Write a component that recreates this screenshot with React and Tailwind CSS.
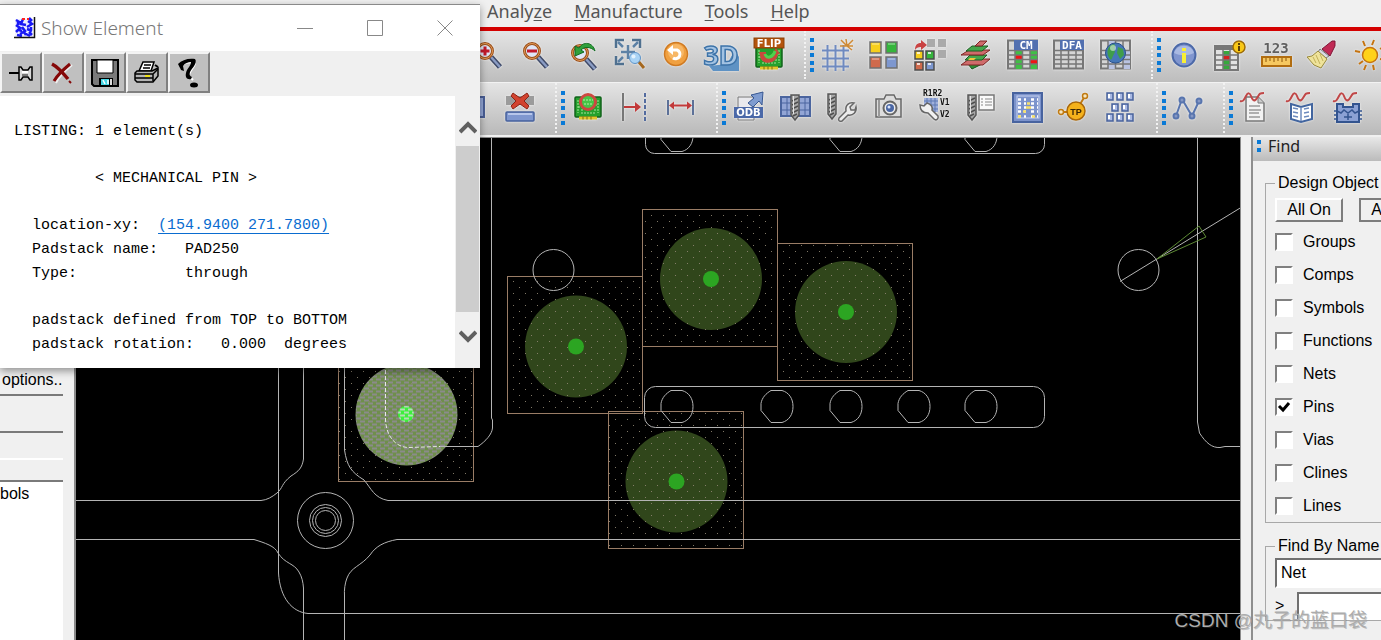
import React, { useState } from 'react';

const hiddenMenus = ['Setup', 'Shape', 'Logic', 'Place', 'FlowPlan', 'Route'];

const menus = [
  { before: 'Analy', key: 'z', after: 'e' },
  { before: '', key: 'M', after: 'anufacture' },
  { before: '', key: 'T', after: 'ools' },
  { before: '', key: 'H', after: 'elp' },
];

const objects = ['Groups', 'Comps', 'Symbols', 'Functions', 'Nets', 'Pins', 'Vias', 'Clines', 'Lines'];

const pads = [
  { x: 507.5, y: 276.5, cx: 576, cy: 346.5 },
  { x: 642.5, y: 209.5, cx: 711, cy: 279 },
  { x: 777.5, y: 243.5, cx: 846, cy: 312 },
  { x: 608.5, y: 411.5, cx: 676.5, cy: 481.5 },
];

const Icon = ({ children }) => (
  <svg width="32" height="32" viewBox="0 0 32 32" fill="none" className="overflow-visible drop-shadow-[0_0_1px_#f4f4f4]">
    {children}
  </svg>
);

/* ---------- toolbar icons, first row ---------- */

const Lens = ({ cx = 12, cy = 12 }) => (
  <g>
    <path d={`M${cx + 6} ${cy + 6}l9 10`} stroke="#3f4a68" strokeWidth="5.5" />
    <path d={`M${cx + 6} ${cy + 6}l9 10`} stroke="#8a9cc4" strokeWidth="2.5" />
    <circle cx={cx} cy={cy} r="7.5" fill="#dfe6f7" stroke="#9a4f1c" strokeWidth="3" />
    <circle cx={cx} cy={cy} r="7.5" stroke="#e39a55" strokeWidth="1" />
  </g>
);

const ZoomIn = () => (
  <Icon><Lens /><path d="M7.500 12h9M12 7.500v9" stroke="#c3192a" strokeWidth="3" /></Icon>
);

const ZoomOut = () => (
  <Icon><Lens /><path d="M7 12h10" stroke="#c3192a" strokeWidth="3" /></Icon>
);

const ZoomPrevious = () => (
  <Icon>
    <Lens cx={14} cy={14} />
    <path d="M29 12C27 3 17 2 13 9l-4-2v10l9-4-3-2c4-4 10-3 14 1z" fill="#31a03b" stroke="#0f6a20" />
  </Icon>
);

const ZoomFit = () => (
  <Icon>
    <path d="M3 9V1h8M19 1h8v8M3 17v8h8" stroke="#4f708f" strokeWidth="2.500" />
    <path d="M5 3l5 5M25 3l-5 5M5 23l5-5M15 6v14M8 13h14" stroke="#5d81a5" strokeWidth="2.500" />
    <path d="M25 22l6 7" stroke="#a5681f" strokeWidth="3" />
    <circle cx="22" cy="19" r="5.500" fill="#a9d3f5" stroke="#5d92c6" />
    <circle cx="20.500" cy="17.500" r="2" fill="#e3f2fd" />
  </Icon>
);

const Refresh = () => (
  <Icon>
    <circle cx="16" cy="15" r="11.500" fill="#f0a040" stroke="#cf7a22" strokeWidth="1.500" />
    <circle cx="16" cy="13" r="8" fill="#f7b765" />
    <path d="M11 11h6a4.500 4.500 0 1 1-4 8" stroke="#fff" strokeWidth="3" />
    <path d="M7 11l6-5v10z" fill="#fff" />
  </Icon>
);

const ThreeD = () => (
  <Icon>
    <path d="M3 27l4 5h26V18l-4-7-8 14z" fill="#5e92c4" />
    <text x="15" y="26" textAnchor="middle" fontSize="27" fontWeight="bold" fontFamily="Noto Sans, sans-serif" fill="#a3c3e3" stroke="#3d73a8" strokeWidth="1.500">3D</text>
  </Icon>
);

const Board = ({ y = 0 }) => (
  <g transform={`translate(0 ${y})`}>
    <rect x="3" y="6" width="26" height="20" rx="1" fill="#25a12d" stroke="#10601a" strokeWidth="1.500" />
    <path d="M6 9v13M26 9v13M9 22h14M9 19h2M22 19h2M6 16h4M23 14h3" stroke="#a7e39b" strokeDasharray="2 1" />
    <path d="M7 27h18" stroke="#e3c62b" strokeWidth="3" />
    <path d="M11 25.500v3M15 25.500v3M19 25.500v3" stroke="#7d6a10" />
  </g>
);

const Flip = () => (
  <Icon>
    <Board y={2} />
    <path d="M6 13h7v2c0 6 8 5 9-1l-3 1 4-6 4 6h-2c-1 11-18 12-18 1z" fill="#c8483c" />
    <path d="M12 15c1 5 8 4 10-3" stroke="#4ed24c" strokeWidth="3" />
    <rect x="1" y="-1" width="30" height="10" fill="#b4540c" stroke="#8a3f06" />
    <text x="16" y="8" textAnchor="middle" fontSize="10" fontWeight="bold" fontFamily="DejaVu Sans" fill="#fff">FLIP</text>
  </Icon>
);

const GridToggle = () => (
  <Icon>
    <path d="M1 11.500h27M1 19.500h27M1 27.500h27M6.500 6v26M14.500 6v26M22.500 6v26" stroke="#6f8ac0" strokeWidth="2" />
    <path d="M26 7l-6-6M26 7l-1-7M26 7l6-6M26 7h6M26 7l5 4M26 7h-7" stroke="#cf8a35" strokeWidth="1.500" />
  </Icon>
);

const Squares = () => (
  <Icon>
    <g stroke="#6f6f6f" strokeWidth="1.500">
      <rect x="2" y="3" width="11" height="11" fill="#f6cf1c" />
      <rect x="18" y="3" width="11" height="11" fill="#35b53c" />
      <rect x="2" y="18" width="11" height="11" fill="#cf6a4c" />
      <rect x="18" y="18" width="11" height="11" fill="#7d97cf" />
    </g>
    <path d="M4 5h7M20 5h7M4 20h7M20 20h7" stroke="#fff" strokeOpacity=".6" />
  </Icon>
);

const SquaresMove = () => (
  <Icon>
    <path d="M13 0h8v8h-8zM24 0h8v8h-8zM24 11h8v8h-8z" fill="#aaa" />
    <g stroke="#4c4c4c" strokeWidth="1.500">
      <rect x="1" y="12" width="8" height="8" fill="#f6cf1c" />
      <rect x="12" y="12" width="8" height="8" fill="#35b53c" />
      <rect x="1" y="23" width="8" height="8" fill="#cf6a4c" />
      <rect x="12" y="23" width="8" height="8" fill="#7d97cf" />
    </g>
    <path d="M3 14h3M14 14h3M3 25h3M14 25h3" stroke="#fff" strokeWidth="1.500" />
    <path d="M1 11c0-6 3-7 6-7V1l6 5-6 5V8c-3 0-5 1-6 3z" fill="#c94343" />
  </Icon>
);

const Layers = () => (
  <Icon>
    <path d="M8 25l10-3 4 3-10 5z" fill="#2f8f37" stroke="#15571c" />
    <path d="M1 26l8-6h21l-7 6z" fill="#cf6b6b" stroke="#7b2424" />
    <path d="M5 21l5-5h17l-5 5z" fill="#44a64b" stroke="#1a5c22" />
    <path d="M1 16l8-5h21l-7 5z" fill="#cf6b6b" stroke="#7b2424" />
    <path d="M6 12l6-5h16l-6 5z" fill="#44a64b" stroke="#1a5c22" />
    <path d="M15 7l5-5h7l-5 5z" fill="#cf6b6b" stroke="#7b2424" />
    <path d="M8 21h6l2-2h-6z" fill="#f0c53b" />
  </Icon>
);

const Sheet = ({ cells }) => (
  <g>
    <rect x="1" y="1.500" width="29" height="28" fill="#d5d5d5" stroke="#777" strokeWidth="2" />
    {cells}
    <path d="M2 11.500h28M2 16h28M2 20.500h28M2 25h28M8 2v28M15.500 2v28M23 2v28" stroke="#777" strokeWidth="1.500" />
  </g>
);

const Banner = ({ children }) => (
  <g>
    <rect x="7" y="1" width="24" height="10" fill="#5270b0" />
    <text x="19" y="10" textAnchor="middle" fontSize="11" fontWeight="bold" fontFamily="DejaVu Sans Mono" fill="#fff">{children}</text>
  </g>
);

const ConstraintManager = () => (
  <Icon>
    <Sheet cells={
      <g>
        <path d="M8 12h7v4H8zM8 21h7v9H8zM23 12h7v8h-7zM23 25h7v5h-7z" fill="#3fbf45" />
        <path d="M8 16h7v4.500H8zM23 20.500h7V25h-7z" fill="#f01414" />
      </g>
    } />
    <Banner>CM</Banner>
  </Icon>
);

const Dfa = () => (
  <Icon><Sheet /><Banner>DFA</Banner></Icon>
);

const GlobeSheet = () => (
  <Icon>
    <Sheet cells={<path d="M8 2h7v28H8zM23 12h7v18h-7z" fill="#b9c3e2" />} />
    <circle cx="15.500" cy="14" r="10" fill="#4577b8" stroke="#27508b" />
    <path d="M9 8c4-4 7-3 6 0s1 4-1 7-2 7-4 5-4-8-1-12zM18 8l5 2 1 6-4 4-3-6z" fill="#3f9d4b" />
    <circle cx="13" cy="9" r="3" fill="#fff" fillOpacity=".5" />
  </Icon>
);

const Info = () => (
  <Icon>
    <circle cx="16" cy="16" r="11.500" fill="#8196cf" stroke="#4c69a8" strokeWidth="2" />
    <path d="M6 14a10.500 10.500 0 0 1 20 0c-6 3-14 3-20 0z" fill="#a9b9e2" />
    <path d="M14 9h4v3h-4zM14 14h4v10h-4z" fill="#f8ef35" />
  </Icon>
);

const SheetInfo = () => (
  <Icon>
    <rect x="0" y="7" width="23" height="24" fill="#e2e2e2" stroke="#777" strokeWidth="2" />
    <rect x="0" y="7" width="23" height="4" fill="#777" />
    <path d="M8 12h7v18H8z" fill="#36a83d" />
    <path d="M8 17h7v4H8z" fill="#d42020" />
    <path d="M0 16h23M0 21h23M0 26h23M8 8v23M15 8v23" stroke="#777" strokeWidth="1.500" />
    <circle cx="24" cy="8" r="6" fill="#f9c817" stroke="#9b6b08" strokeWidth="1.500" />
    <path d="M23 4h2v2h-2zM23 7h2v5h-2z" fill="#5d3f04" />
  </Icon>
);

const Measure = () => (
  <Icon>
    <text x="15" y="14" textAnchor="middle" fontSize="14" fontWeight="bold" fontFamily="DejaVu Sans Mono" fill="#606060">123</text>
    <rect x="1" y="18" width="29" height="9" fill="#f6c860" stroke="#b16d10" strokeWidth="2" />
    <path d="M5 19v4M9 19v3M13 19v4M17 19v3M21 19v4M25 19v3" stroke="#8a5208" />
  </Icon>
);

const Brush = () => (
  <Icon>
    <path d="M25 2h3v5l-5 10-8-7z" fill="#c02a55" stroke="#7c1535" />
    <path d="M13 10l9 7-3 2-8-6z" fill="#d9d9e4" stroke="#777" />
    <path d="M11 12l9 8-6 9-7-3-7-8 5-1z" fill="#efe39a" stroke="#97883a" />
    <path d="M9 16l4 9M6 18l3 6M13 15l3 7" stroke="#c2b15b" />
  </Icon>
);

const Sun = () => (
  <Icon>
    <circle cx="16" cy="16" r="7.500" fill="#ffd21a" stroke="#c5730f" strokeWidth="1.500" />
    <path d="M20 1l-2 5M20 31l-1-5M1 12l5 1M26 20l5 1M5 25l4-3M26 10l5-3M9 2l2 5M12 26l-2 5" stroke="#c5730f" strokeWidth="2" />
  </Icon>
);

/* ---------- toolbar icons, second row ---------- */

const Panel = () => (
  <Icon><rect x="0" y="5" width="27" height="20" fill="#93a7d8" stroke="#4a5f96" strokeWidth="2" /></Icon>
);

const Unplace = () => (
  <Icon>
    <rect x="2" y="4" width="28" height="9" fill="#9b9b9b" />
    <path d="M9 1l7 5 7-5 2 3-5 5 5 5-2 3-7-5-7 5-2-3 5-5-5-5z" fill="#d2432f" stroke="#8c2415" />
    <rect x="2" y="20" width="28" height="9" rx="1" fill="#7f97cf" stroke="#46609c" strokeWidth="1.500" />
    <path d="M4 22h24" stroke="#b7c6ea" strokeWidth="2" />
  </Icon>
);

const BoardRing = () => (
  <Icon>
    <Board y={-1} />
    <circle cx="16" cy="10" r="7.500" fill="#46c546" stroke="#cd4840" strokeWidth="3" />
    <path d="M11 8h10M13 11v3M16 11v3M19 11v3" stroke="#b7f0a9" strokeDasharray="2 1" />
  </Icon>
);

const MoveTo = () => (
  <Icon>
    <path d="M5 1v28" stroke="#777" strokeWidth="2" />
    <path d="M27 1v28" stroke="#536b9e" strokeWidth="2" strokeDasharray="4 2" />
    <path d="M6 15h13" stroke="#c23a3a" strokeWidth="2" />
    <path d="M17 10l6 5-6 5z" fill="#c23a3a" />
  </Icon>
);

const Dimension = () => (
  <Icon>
    <path d="M3 8v15M28 8v15" stroke="#5d7198" strokeWidth="2" />
    <path d="M6 13.500h19" stroke="#c23a3a" strokeWidth="2" />
    <path d="M4 13.500l5-4v8zM27 13.500l-5-4v8z" fill="#c23a3a" />
  </Icon>
);

const Odb = () => (
  <Icon>
    <path d="M5 5h16v23H5z" fill="#e9e9ed" stroke="#777" />
    <rect x="1" y="15" width="29" height="11" fill="#4a68a8" />
    <text x="15.500" y="24" textAnchor="middle" fontSize="10" fontWeight="bold" fontFamily="DejaVu Sans" fill="#fff">ODB</text>
    <path d="M15 11l6-5-3-3 12-3-1 13-3-4-6 6z" fill="#7f9cd0" stroke="#35558f" />
  </Icon>
);

const Drill = ({ x = 0, y = 0 }) => (
  <g transform={`translate(${x} ${y})`}>
    <path d="M0 0h8v20l-4 5-4-5z" fill="#a8a8a8" stroke="#555" strokeWidth="1.500" />
    <path d="M1 6l6-3M1 10l6-3M1 14l6-3M1 18l6-3M2 21l4-2" stroke="#4f4f4f" strokeWidth="1.500" />
    <path d="M2.500 1v18" stroke="#e5e5e5" />
  </g>
);

const DrillTable = () => (
  <Icon>
    <rect x="1" y="5" width="29" height="19" fill="#92a5d5" stroke="#4b659f" strokeWidth="2" />
    <path d="M1 11h29M1 18h29M7 5v19M25 5v19" stroke="#4b659f" />
    <Drill x={11} y={3} />
  </Icon>
);

const DrillSetup = () => (
  <Icon>
    <Drill x={2} y={2} />
    <path d="M13 26l7-7c-1-6 3-9 8-8l-4 4 1 3h4l1-3c1 5-3 9-8 8l-6 6c-3 1-4-1-3-3z" fill="#ececec" stroke="#666" strokeWidth="1.500" />
  </Icon>
);

const CameraShot = () => (
  <Icon>
    <path d="M3 7h8l2-4h8l2 4h5v18H3z" fill="#dcdcdc" stroke="#666" strokeWidth="1.500" />
    <path d="M6 8v17" stroke="#999" strokeWidth="2" />
    <circle cx="17" cy="16" r="6.500" fill="#eee" stroke="#666" strokeWidth="2" />
    <circle cx="17" cy="16" r="4" fill="#4a67a5" />
    <circle cx="16" cy="15" r="1.500" fill="#dbe5fb" />
  </Icon>
);

const Rename = () => (
  <Icon>
    <path d="M5 6h14v14H5z" fill="#9fb0dc" />
    <path d="M5 9h14M5 13h14M5 17h14M8 6v14M12 6v14M16 6v14" stroke="#5d78b3" />
    <path d="M1 13l4 1 3-3c4 1 6 4 5 7l6 6c1 3-2 5-4 3l-6-6c-5 0-8-3-8-8z" fill="#f1f1f1" stroke="#666" strokeWidth="1.500" />
    <g fontSize="8" fontWeight="bold" fontFamily="DejaVu Sans Mono" fill="#111">
      <text x="4" y="4">R1R2</text>
      <text x="21" y="13">V1</text>
      <text x="21" y="25">V2</text>
    </g>
  </Icon>
);

const DrillLegend = () => (
  <Icon>
    <Drill x={3} y={3} />
    <rect x="14" y="3" width="15" height="15" fill="#fafafa" stroke="#777" strokeWidth="1.500" />
    <path d="M16 7h2M16 10h2M16 13h2M20 7h7M20 10h7M20 13h7" stroke="#888" />
  </Icon>
);

const Matrix = () => (
  <Icon>
    <rect x="1" y="1" width="29" height="29" fill="#7c93cc" stroke="#48639f" strokeWidth="2" />
    <rect x="5" y="4" width="22" height="22" stroke="#c6d1ef" />
    <path d="M6 7.500h20M6 11.500h20M6 15.500h20M6 19.500h20M6 24.500h20" stroke="#fff" strokeWidth="2.500" strokeDasharray="3 3 2 5" />
    <path d="M15 11.500h3M11 19.500h3M6 24.500h3M20 24.500h3M14 15.500h5" stroke="#f5df6a" strokeWidth="2.500" />
  </Icon>
);

const TestPoint = () => (
  <Icon>
    <path d="M4 20h10M21 14l6-10" stroke="#c07a12" strokeWidth="2" />
    <circle cx="3" cy="20" r="2.500" fill="#f5e6c0" stroke="#c07a12" strokeWidth="1.500" />
    <circle cx="27" cy="4" r="2.500" fill="#f5e6c0" stroke="#c07a12" strokeWidth="1.500" />
    <circle cx="18" cy="19" r="9" fill="#f5b21c" stroke="#a9680b" strokeWidth="1.500" />
    <text x="18" y="23" textAnchor="middle" fontSize="9" fontWeight="bold" fontFamily="Liberation Sans" fill="#3b2605">TP</text>
  </Icon>
);

const Array3 = () => (
  <Icon>
    {[[2, 1], [12, 1], [22, 1], [7, 12], [17, 12], [2, 22], [12, 22], [22, 22]].map(([x, y]) => (
      <g key={`${x}-${y}`}>
        <rect x={x} y={y} width="6" height="7" fill="#a9b9e3" stroke="#47619b" strokeWidth="1.500" />
        <path d={`M${x + 2} ${y + 1}v4`} stroke="#fff" strokeWidth="2" />
      </g>
    ))}
  </Icon>
);

const Polyline = () => (
  <Icon>
    <path d="M3 24L9 7l10 17 7-15" stroke="#5875ae" strokeWidth="2" />
    <g fill="#8597c4" stroke="#5875ae" strokeWidth="2">
      <circle cx="3" cy="24" r="2.500" />
      <circle cx="9" cy="8" r="2.500" />
      <circle cx="19" cy="24" r="2.500" />
      <circle cx="26" cy="9" r="2.500" />
    </g>
  </Icon>
);

const Wave = () => (
  <path d="M0 9C3 10 4 8 6 4s4-3 5 0 3 7 6 2 3-5 7-5" stroke="#c04747" strokeWidth="2" />
);

const WaveReport = () => (
  <Icon>
    <path d="M6 5h12l6 6v18H6z" fill="#f2f2f2" stroke="#777" strokeWidth="1.500" />
    <path d="M18 5v6h6" fill="#ccc" stroke="#777" />
    <path d="M9 14h11M9 18h12M9 21h10M9 25h11" stroke="#999" strokeWidth="1.500" />
    <Wave />
  </Icon>
);

const WaveBook = () => (
  <Icon>
    <path d="M5 12l10 3 11-3v15l-11 3-10-3z" fill="#fff" stroke="#42659f" strokeWidth="2" />
    <path d="M15 15v14M7 16l5 1M7 20l5 1M7 24l5 1M23 16l-5 1M23 20l-5 1M23 24l-5 1" stroke="#6d8abd" strokeWidth="1.500" />
    <Wave />
  </Icon>
);

const WaveChip = () => (
  <Icon>
    <path d="M4 12h6v3h10v-3h6v18H4z" fill="#8ba1d4" stroke="#33548f" strokeWidth="2" />
    <path d="M1 19h3M1 23h3M1 27h3M26 19h3M26 23h3M26 27h3M4 19l4 2 3-3 4 3 4-3 3 3 4-2M15 20v8M11 25h8" stroke="#33548f" strokeWidth="1.500" />
    <Wave />
  </Icon>
);

/* ---------- dialog icons ---------- */

const AppMark = () => (
  <svg width="22" height="22" viewBox="0 0 22 22" fill="none" className="shrink-0">
    <path d="M1 2h18v18H1z" fill="#eef" />
    <path d="M2 3l5 3M9 2l-2 5 5 1M14 4l4 3-5 3M2 8l4 3-4 4M8 10l3 4-5 3M13 12l5 2M12 17l4 2M3 18l5 1M17 10v3M4 5v3M15 1l3 3M10 15l2 3M5 13l3 1M15 15l3 3" stroke="#1818f5" strokeWidth="2.500" />
    <path d="M8 2h3M13 2h2" stroke="#f22" strokeWidth="2" />
    <path d="M0 20.500h20.500V0" stroke="#111" strokeWidth="1.500" />
  </svg>
);

const Pushpin = () => (
  <svg width="26" height="28" viewBox="0 0 26 28" fill="none">
    <path d="M1 14h11" stroke="#000" strokeWidth="2" />
    <path d="M11 8h2l2 3h5l2-3h2v13h-2l-2-3h-5l-2 3h-2z" fill="#d8d8d8" stroke="#000" strokeWidth="1.500" />
    <path d="M14 13h6" stroke="#fff" strokeWidth="2" />
    <path d="M14 16h6" stroke="#777" strokeWidth="2" />
  </svg>
);

const RedCross = () => (
  <svg width="26" height="28" viewBox="0 0 26 28" fill="none">
    <path d="M22 6C16 11 9 17 6 24" stroke="#eee" strokeWidth="2" />
    <path d="M2 5c6 3 11 9 16 15" stroke="#850808" strokeWidth="3.500" />
    <path d="M20 5C14 10 8 15 4 22" stroke="#850808" strokeWidth="3" />
    <path d="M19 22l2 2" stroke="#850808" strokeWidth="2" />
  </svg>
);

const Floppy = () => (
  <svg width="28" height="28" viewBox="0 0 28 28" fill="none">
    <path d="M1 1h26v26H3l-2-2z" fill="#7a7a7a" stroke="#000" strokeWidth="2" />
    <path d="M6 1h16v13H6z" fill="#fff" stroke="#000" />
    <path d="M8 19h14v8H8z" fill="#000" />
    <path d="M10 20h8v6h-8z" fill="#45d6e4" />
    <path d="M12 21l2 4M17 21v4" stroke="#fff" strokeWidth="1.500" />
    <path d="M19 20h2v6h-2z" fill="#ddd" />
  </svg>
);

const Printer = () => (
  <svg width="28" height="28" viewBox="0 0 28 28" fill="none">
    <path d="M10 3h11l-3 9H6z" fill="#fff" stroke="#000" strokeWidth="1.500" />
    <path d="M11 6h7M10 9h7" stroke="#000" strokeWidth="1.500" />
    <path d="M4 12h15l6-3v8l-5 6H4l-2-2v-7z" fill="#b5b5b5" stroke="#000" strokeWidth="1.500" />
    <path d="M2 15h18v7M20 15l5-5M2 19h18" stroke="#000" strokeWidth="1.500" />
    <path d="M12 17h5" stroke="#f0e21a" strokeWidth="2" />
    <path d="M22 6l3 2" stroke="#000" strokeWidth="2" />
  </svg>
);

const HelpMark = () => (
  <svg width="28" height="30" viewBox="0 0 28 30" fill="none">
    <path d="M6 11C5 6 11 4 20 4c1 5-6 8-6 14l4 4" stroke="#fff" strokeWidth="2" />
    <path d="M3 6C7 2 13 0 20 1c3 4-3 9-5 13-1 3 0 4 2 5l-1 2c-4 1-6-2-5-6 1-5 5-7 5-11-3 0-6 1-8 4l1 5-3-1z" fill="#000" />
    <ellipse cx="19" cy="27" rx="4" ry="2.500" fill="#000" />
  </svg>
);

const dialogTools = [
  { label: 'Pin window', icon: <Pushpin /> },
  { label: 'Close listing', icon: <RedCross /> },
  { label: 'Save', icon: <Floppy /> },
  { label: 'Print', icon: <Printer /> },
  { label: 'Help', icon: <HelpMark /> },
];

function Handle() {
  return (
    <div className="ml-1 flex h-[34px] w-1 shrink-0 flex-col justify-between">
      {[0, 1, 2, 3, 4].map(i => <span key={i} className="size-1 bg-[#0a7ad6]" />)}
    </div>
  );
}

function ToolGroup({ icons, className, columns, first }) {
  return (
    <div className={`flex shrink-0 items-center ${first ? 'justify-end' : 'border-l-2 border-dotted border-[#f2f2f2]'} pr-3 ${className}`}>
      {!first && <Handle />}
      <div className={`grid ${columns}`}>
        {icons.map((Glyph, i) => (
          <button key={i} type="button" aria-label={Glyph.name} className="flex justify-center">
            <Glyph />
          </button>
        ))}
      </div>
    </div>
  );
}

function MenuBar() {
  return (
    <nav className="flex h-[27px] shrink-0 items-center bg-[#f0f0f0] pb-[5px] font-['Noto_Sans',sans-serif] text-[18px] leading-6 text-[#555]">
      <div className="flex w-[487px] shrink-0 gap-5 overflow-hidden pl-[43px]">
        {hiddenMenus.map(m => <button key={m} type="button">{m}</button>)}
      </div>
      <div className="flex gap-[22px]">
        {menus.map(m => (
          <button key={m.key} type="button">
            {m.before}<span className="underline underline-offset-2">{m.key}</span>{m.after}
          </button>
        ))}
      </div>
    </nav>
  );
}

function Toolbars() {
  return (
    <div className="shrink-0 overflow-hidden border-t-4 border-[#d40000]">
      <div className="flex h-[51px] bg-linear-to-b from-[#e4e4e4] to-[#bdbdbd] pb-[3px]">
        <ToolGroup first className="w-[804px]" columns="w-[326px] grid-cols-7" icons={[ZoomIn, ZoomOut, ZoomPrevious, ZoomFit, Refresh, ThreeD, Flip]} />
        <ToolGroup className="w-[347px]" columns="w-[326px] grid-cols-7" icons={[GridToggle, Squares, SquaresMove, Layers, ConstraintManager, Dfa, GlobeSheet]} />
        <ToolGroup className="w-[254px]" columns="w-[233px] grid-cols-5" icons={[Info, SheetInfo, Measure, Brush, Sun]} />
      </div>
      <div className="flex h-[53px] border-t border-[#f2f2f2] bg-linear-to-b from-[#e4e4e4] to-[#b9b9b9] pb-[2px]">
        <ToolGroup first className="w-[555px]" columns="w-[93px] grid-cols-2" icons={[Panel, Unplace]} />
        <ToolGroup className="w-[161px]" columns="w-[140px] grid-cols-3" icons={[BoardRing, MoveTo, Dimension]} />
        <ToolGroup className="w-[440px]" columns="w-[419px] grid-cols-9" icons={[Odb, DrillTable, DrillSetup, CameraShot, Rename, DrillLegend, Matrix, TestPoint, Array3]} />
        <ToolGroup className="w-[67px]" columns="w-[46px] grid-cols-1" icons={[Polyline]} />
        <ToolGroup className="w-[161px]" columns="w-[140px] grid-cols-3" icons={[WaveReport, WaveBook, WaveChip]} />
      </div>
    </div>
  );
}

// hole outline with the flat lower-left edge
const Hole = ({ cx, cy }) => (
  <path d={`M${cx - 16} ${cy + 4}V${cy - 3}C${cx - 15} ${cy - 9} ${cx - 11} ${cy - 13} ${cx - 6} ${cy - 16}H${cx + 5}C${cx + 12} ${cy - 14} ${cx + 16} ${cy - 8} ${cx + 16} ${cy}S${cx + 12} ${cy + 14} ${cx + 5} ${cy + 16}H${cx - 6}Z`} />
);

function BoardView() {
  return (
    <svg width="100%" height="100%" className="block bg-black">
      <defs>
        <pattern id="dots" width="12" height="12" patternUnits="userSpaceOnUse">
          <rect x="9" y="5" width="1" height="1" fill="#8d8470" />
          <rect x="3" y="11" width="1" height="1" fill="#8d8470" />
        </pattern>
        <pattern id="hatch" width="8" height="6" patternUnits="userSpaceOnUse">
          <rect width="8" height="6" fill="#6f8f4c" />
          <path d="M0 1.500h5M4 4.500h4M0 4.500h1" stroke="#8b8b8b" strokeWidth="2" />
        </pattern>
        <pattern id="hatchCore" width="8" height="6" patternUnits="userSpaceOnUse">
          <rect width="8" height="6" fill="#3cf03c" />
          <path d="M0 1.500h5M4 4.500h4M0 4.500h1" stroke="#b5dcb5" strokeWidth="2" />
        </pattern>
      </defs>
      <g transform="translate(-76 -138)" fill="none" stroke="#b4b4b4">
        {pads.map(p => (
          <g key={p.cx} stroke="none">
            <circle cx={p.cx} cy={p.cy} r="51" fill="#30461b" />
            <rect x={p.x} y={p.y} width="135" height="137" fill="url(#dots)" fillOpacity=".9" stroke="#9a7d66" />
            <circle cx={p.cx} cy={p.cy} r="8" fill="#2ca522" />
          </g>
        ))}

        {/* highlighted pad */}
        <circle cx="406.500" cy="414.500" r="51" fill="url(#hatch)" stroke="none" />
        <rect x="338.500" y="345.500" width="135" height="136" fill="url(#dots)" fillOpacity=".9" stroke="#9a7d66" />
        <circle cx="406" cy="414" r="8" fill="url(#hatchCore)" stroke="none" />
        <path d="M385.500 340V420C386 434 394 447 408 447.500L440 446.500" stroke="#e8e8e8" strokeDasharray="4 2" />
        <path d="M440 446.500H478C486 441 492 434 492.500 428V420L491.500 418V138" />

        {/* board outline */}
        <path d="M278.500 340V573C280 598 292 612 308 613.500H2600" />
        <path d="M303.500 340V459C302 468 299 471 291 476C281 484 283 488 277 493C272 497 267 500 261 500.500H76" />
        <path d="M344.500 340V450C347 466 351 472 364 480C371 488 374 498 388 500.500H2600" />
        <path d="M76 539.500H254C265 543 275 546 278 553C285 564 294 563 299 572C302 577 303 582 303.500 588V1400" />
        <path d="M2600 539.500H397C384 542 376 546 370 555C361 566 351 567 347 578C345 583 344 590 344.500 596V1400" />
        <circle cx="325.500" cy="520.500" r="28" />
        <circle cx="325.500" cy="520.500" r="16" />
        <circle cx="325.500" cy="520.500" r="13" />
        <circle cx="325.500" cy="520.500" r="10" />

        {/* slots */}
        <rect x="644.500" y="386.500" width="400" height="41" rx="11" />
        <rect x="645.500" y="112.500" width="399" height="41" rx="9" />
        {[677, 777, 846, 914, 981].map(x => <Hole key={x} cx={x} cy={406.5} />)}
        {[677, 846, 981].map(x => <Hole key={x} cx={x} cy={135.5} />)}

        <circle cx="553.500" cy="270" r="20.500" />
        <circle cx="1138.500" cy="270" r="20.500" />
        <path d="M1197.500 138V422L1199.500 433C1206 443 1212 448 1220 447.500L1225 446.500H2600" />
        <path d="M1120 281.500L1241 207.500" />
        <path d="M1157 259L1199 226L1206 237Z" stroke="#5d8a34" />
      </g>
    </svg>
  );
}

function OptionsPane() {
  return (
    <aside className="flex w-[76px] shrink-0 flex-col overflow-hidden border-r-2 border-[#8a8a8a] bg-[#f0f0f0] pt-[231px] font-['Liberation_Sans',sans-serif] text-base leading-6 text-black">
      <p className="h-[26px] pl-[2px]">options..</p>
      <div className="flex w-[63px] flex-col">
        <div className="h-[37px] border-t-2 border-[#7a7a7a]" />
        <div className="h-[27px] border-t-2 border-[#7a7a7a]" />
        <div className="h-[22px] border-t-2 border-white" />
      </div>
      <div className="w-[63px] flex-1 border-t-2 border-[#7a7a7a] bg-white">bols</div>
    </aside>
  );
}

function FindPanel() {
  const [checked, setChecked] = useState({ Pins: true });
  const [kind, setKind] = useState('Net');
  const [name, setName] = useState('');

  return (
    <aside className="w-[140px] shrink-0 overflow-hidden bg-[#f0f0f0] pl-[10px] font-['Liberation_Sans',sans-serif] text-base text-black">
      <div className="h-full border-l-2 border-[#8e8e8e]">
        <h2 className="flex h-6 items-center gap-[7px] bg-linear-to-b from-[#e8e8e8] to-[#bbb] pb-[6px] pl-1 font-['Noto_Sans',sans-serif] text-base text-[#222]">
          <span className="flex flex-col gap-1">
            <span className="size-1 bg-[#0a7ad6]" />
            <span className="size-1 bg-[#0a7ad6]" />
          </span>
          Find
        </h2>
        <div className="flex w-[200px] flex-col gap-[11px] pl-3 pt-[10px]">
          <fieldset className="border border-[#a8a8a8] pl-[9px]">
            <legend className="px-[3px] leading-6">Design Object</legend>
            <div className="flex gap-4 pt-[3px]">
              <button type="button" className="h-6 w-[68px] border-2 border-t-white border-l-white border-r-[#7d7d7d] border-b-[#7d7d7d] leading-5">All On</button>
              <button type="button" className="h-6 w-[68px] border-2 border-[#7d7d7d] leading-5">All Off</button>
            </div>
            <div className="pt-[3px]">
              {objects.map(o => (
                <label key={o} className="flex h-[33px] items-center gap-[10px]">
                  <span className="grid size-[18px]">
                    <input
                      type="checkbox"
                      checked={!!checked[o]}
                      onChange={(e) => setChecked({ ...checked, [o]: e.target.checked })}
                      className="col-start-1 row-start-1 size-[18px] appearance-none border-2 border-t-[#808080] border-l-[#808080] border-r-white border-b-white bg-white"
                    />
                    {checked[o] && (
                      <svg viewBox="0 0 18 18" className="pointer-events-none col-start-1 row-start-1" fill="none">
                        <path d="M4 8l4 4 6-7" stroke="#000" strokeWidth="3" />
                      </svg>
                    )}
                  </span>
                  {o}
                </label>
              ))}
            </div>
          </fieldset>
          <fieldset className="border border-[#a8a8a8] pl-[9px]">
            <legend className="px-[3px] leading-6">Find By Name</legend>
            <select
              aria-label="Find By Name"
              value={kind}
              onChange={(e) => setKind(e.target.value)}
              className="block h-[30px] w-full appearance-none border-2 border-t-[#707070] border-l-[#707070] border-r-white border-b-white bg-white pl-1"
            >
              <option>Net</option>
              <option>Symbol</option>
            </select>
            <div className="flex items-center gap-[13px] pt-1">
              <span>&gt;</span>
              <input
                aria-label="Name"
                value={name}
                onChange={(e) => setName(e.target.value)}
                className="h-[28px] min-w-0 flex-1 border-2 border-t-[#707070] border-l-[#707070] border-r-white border-b-white bg-white px-1"
              />
            </div>
          </fieldset>
        </div>
      </div>
    </aside>
  );
}

const Line = ({ children }) => <p className="h-6 whitespace-pre">{children}</p>;
const Blank = () => <div className="h-[23px]" />;

function ShowElement() {
  return (
    <section className="absolute left-0 top-1 flex h-[364px] w-[480px] flex-col border-t border-[#8a8a8a] bg-[#f0f0f0] shadow-[0_3px_8px_rgba(0,0,0,0.4)]">
      <header className="flex h-[46px] shrink-0 items-center bg-white pl-[14px]">
        <AppMark />
        <h1 className="flex-1 pl-[5px] font-['Noto_Sans',sans-serif] text-[19px] font-light text-[#777]">Show Element</h1>
        <button type="button" aria-label="Minimize" className="flex w-[70px] justify-center">
          <svg width="16" height="16" viewBox="0 0 16 16" stroke="#888"><path d="M0 8.500h16" /></svg>
        </button>
        <button type="button" aria-label="Maximize" className="flex w-[70px] justify-center">
          <svg width="16" height="16" viewBox="0 0 16 16" fill="none" stroke="#888"><path d="M.5.5h15v15H.5z" /></svg>
        </button>
        <button type="button" aria-label="Close" className="flex w-[70px] justify-center">
          <svg width="16" height="16" viewBox="0 0 16 16" stroke="#888"><path d="M.5.5l15 15M15.500.5l-15 15" /></svg>
        </button>
      </header>
      <div className="flex h-[45px] shrink-0 pt-[1px]">
        {dialogTools.map(t => (
          <button key={t.label} type="button" aria-label={t.label} className="flex h-[41px] w-[42px] items-center justify-center border-2 border-t-[#f4f4f4] border-l-[#f4f4f4] border-r-[#808080] border-b-[#808080] bg-[#c0c0c0]">
            {t.icon}
          </button>
        ))}
      </div>
      <div className="flex min-h-0 flex-1">
        <div className="flex-1 bg-white pl-[14px] pt-6 font-['Liberation_Mono',monospace] text-[15px] leading-6 text-black">
          <Line>LISTING: 1 element(s)</Line>
          <Blank />
          <Line>{'         < MECHANICAL PIN >'}</Line>
          <Blank />
          <Line>
            {'  location-xy:  '}
            <a href="#location" className="text-[#0a6cd0] underline underline-offset-4">(154.9400 271.7800)</a>
          </Line>
          <Line>{'  Padstack name:   PAD250'}</Line>
          <Line>{'  Type:            through'}</Line>
          <Blank />
          <Line>{'  padstack defined from TOP to BOTTOM'}</Line>
          <Line>{'  padstack rotation:   0.000  degrees'}</Line>
        </div>
        <div className="flex w-[25px] flex-col items-center pt-6 pb-6">
          <svg width="18" height="14" viewBox="0 0 18 14" fill="none" stroke="#606060" strokeWidth="4"><path d="M1 12l8-8 8 8" /></svg>
          <div className="mt-3 mb-[18px] w-[23px] flex-1 bg-[#cdcdcd]" />
          <svg width="18" height="14" viewBox="0 0 18 14" fill="none" stroke="#606060" strokeWidth="4"><path d="M1 2l8 8 8-8" /></svg>
        </div>
      </div>
    </section>
  );
}

export default function App() {
  return (
    <div className="relative flex h-screen flex-col overflow-hidden bg-[#f0f0f0]">
      <MenuBar />
      <Toolbars />
      <main className="flex min-h-0 flex-1 pt-[2px]">
        <OptionsPane />
        <div className="min-w-0 flex-1 border-t border-r border-[#8a8a8a]">
          <BoardView />
        </div>
        <FindPanel />
      </main>
      <ShowElement />
      <p className="absolute right-[14px] bottom-[7px] font-['Liberation_Sans','Noto_Sans_CJK_SC',sans-serif] text-[19px] leading-6 text-[#acacac] [text-shadow:1px_1px_0_#66666655]">CSDN @丸子的蓝口袋</p>
    </div>
  );
}
